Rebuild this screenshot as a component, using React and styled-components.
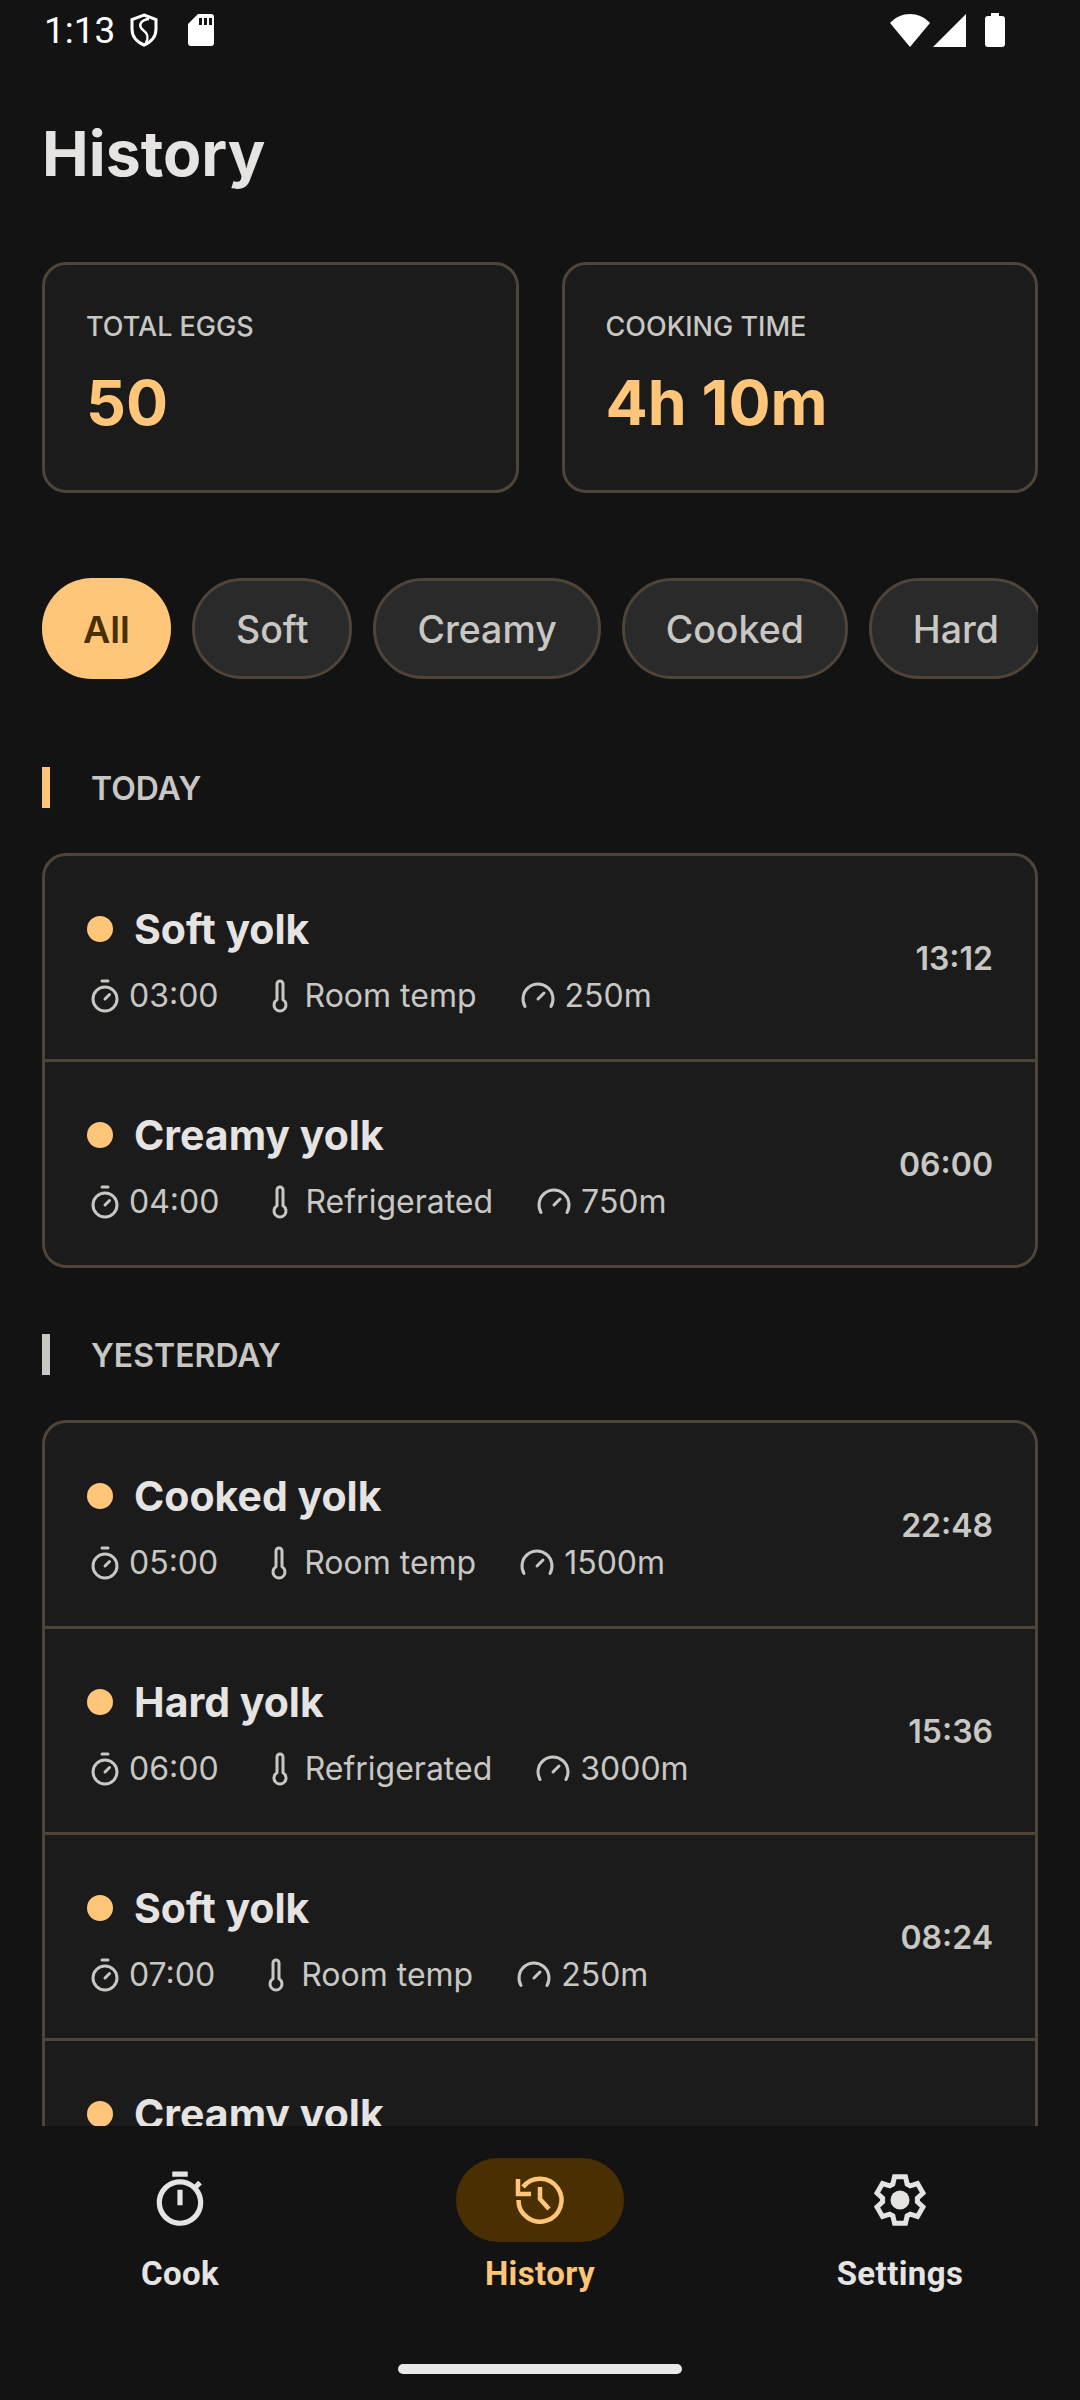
import React from "react";
import styled, { createGlobalStyle } from "styled-components";
import { Timer, Thermometer, Gauge } from "lucide-react";
import { MdOutlineTimer } from "react-icons/md";

const ACCENT = "#ffc67a";
const LINE = "#4e4438";

const Global = createGlobalStyle`
  html, body { margin: 0; padding: 0; background: #131313; }
  * { box-sizing: border-box; }
`;

const Screen = styled.div`
  width: 1080px;
  height: 2400px;
  display: flex;
  flex-direction: column;
  overflow: hidden;
  background: #131313;
  font-family: Inter, "Liberation Sans", sans-serif;
`;

const StatusBar = styled.div`
  height: 60px;
  flex-shrink: 0;
  display: flex;
  align-items: center;
  justify-content: space-between;
  padding: 0 75px 0 44px;
  color: #fff;
  font-family: Roboto, sans-serif;
  font-size: 37px;
`;

const StatusGroup = styled.div`
  display: flex;
  align-items: center;
  gap: ${(p) => p.$gap || 0}px;
  margin-left: ${(p) => p.$left || 0}px;
`;

const Main = styled.main`
  flex: 1;
  min-height: 0;
  overflow: hidden;
  padding: 57px 42px 0;
`;

const Title = styled.h1`
  margin: 0 0 73px;
  font-size: 62.5px;
  line-height: 72px;
  font-weight: 700;
  color: #e6e4e2;
`;

const Stats = styled.div`
  display: grid;
  grid-template-columns: 1fr 1fr;
  gap: 43px;
  margin-bottom: 85px;
`;

const StatCard = styled.div`
  height: 231px;
  padding: 44px 41px;
  background: #1b1b1b;
  border: 3px solid ${LINE};
  border-radius: 24px;
`;

const StatLabel = styled.div`
  font-size: 27px;
  line-height: 36px;
  font-weight: 500;
  color: #c8c7c4;
`;

const StatValue = styled.div`
  margin-top: 20px;
  font-size: 62.5px;
  line-height: 74px;
  font-weight: 700;
  color: ${ACCENT};
`;

const Chips = styled.div`
  display: flex;
  gap: 21px;
  overflow: hidden;
  margin-bottom: 88px;
`;

const Chip = styled.div`
  flex-shrink: 0;
  height: 101px;
  padding: 2px ${(p) => (p.$active ? 41 : 41)}px 0;
  display: flex;
  align-items: center;
  border-radius: 50px;
  font-size: 37.5px;
  font-weight: ${(p) => (p.$active ? 600 : 500)};
  color: ${(p) => (p.$active ? "#4a2f02" : "#c8c7c4")};
  background: ${(p) => (p.$active ? ACCENT : "#2a2a2a")};
  border: ${(p) => (p.$active ? "none" : `3px solid ${LINE}`)};
`;

const SectionHead = styled.div`
  height: 41px;
  display: flex;
  align-items: center;
  padding: 2px 0 0 41px;
  margin-bottom: 45px;
  border-left: 8px solid ${(p) => (p.$accent ? ACCENT : "#c8c7c4")};
  font-size: 32px;
  font-weight: 600;
  color: #c8c7c4;
`;

const Card = styled.div`
  margin-bottom: 66px;
  background: #1b1b1b;
  border: 3px solid ${LINE};
  border-radius: 24px;
`;

const Row = styled.div`
  height: ${(p) => (p.$first ? 203 : 206)}px;
  display: flex;
  align-items: center;
  justify-content: space-between;
  padding: 0 42px;
  border-top: ${(p) => (p.$first ? "none" : `3px solid ${LINE}`)};
`;

const RowBody = styled.div`
  display: flex;
  flex-direction: column;
  gap: 20px;
  padding-top: 6px;
`;

const RowTitle = styled.div`
  display: flex;
  align-items: center;
  gap: 21px;
  font-size: 41px;
  line-height: 50px;
  font-weight: 700;
  color: #e6e4e2;
`;

const Dot = styled.span`
  width: 26px;
  height: 26px;
  border-radius: 50%;
  background: ${ACCENT};
`;

const Meta = styled.div`
  display: flex;
  gap: 43px;
  font-size: 32px;
  line-height: 44px;
  color: #c8c7c4;
`;

const MetaItem = styled.span`
  display: flex;
  align-items: center;
  gap: ${(p) => p.$gap}px;
`;

const RowTime = styled.div`
  padding-top: 2px;
  font-size: 32px;
  font-weight: 600;
  color: #c8c7c4;
`;

const Nav = styled.nav`
  height: 274px;
  flex-shrink: 0;
  position: relative;
  display: grid;
  grid-template-columns: repeat(3, 1fr);
  align-items: start;
  padding-top: 32px;
  background: #131313;
`;

const NavItem = styled.div`
  display: flex;
  flex-direction: column;
  align-items: center;
  font-family: Roboto, sans-serif;
  font-size: 33px;
  line-height: 40px;
  font-weight: 700;
  letter-spacing: 0.4px;
  color: ${(p) => (p.$active ? ACCENT : "#e6e4e2")};
`;

const NavIcon = styled.div`
  width: 168px;
  height: 84px;
  margin-bottom: 12px;
  display: flex;
  align-items: center;
  justify-content: center;
  border-radius: 42px;
  background: ${(p) => (p.$active ? "#4a2f02" : "transparent")};
`;

const HomeBar = styled.div`
  position: absolute;
  left: 398px;
  bottom: 26px;
  width: 284px;
  height: 10px;
  border-radius: 5px;
  background: #e8e8e8;
`;

// six tooth gear outline with a filled middle, no package has this exact one
function gearPath() {
  const pts = [];
  for (let k = 0; k < 6; k++) {
    const a = (k * 60 - 90) * (Math.PI / 180);
    [
      [17.5, -0.42],
      [24, -0.23],
      [24, 0.23],
      [17.5, 0.42],
    ].forEach(([r, d]) => {
      pts.push(`${(33 + r * Math.cos(a + d)).toFixed(2)} ${(33 + r * Math.sin(a + d)).toFixed(2)}`);
    });
  }
  return `M${pts.join("L")}Z`;
}

const GearIcon = () => (
  <svg width="66" height="66" viewBox="0 0 66 66" fill="none" stroke="#e6e4e2" strokeWidth="5">
    <path d={gearPath()} />
    <circle cx="33" cy="33" r="9.5" fill="#e6e4e2" stroke="none" />
  </svg>
);

const HistoryIcon = () => (
  <svg width="66" height="66" viewBox="-33 -33 66 66" fill="none" stroke={ACCENT} strokeWidth="4.5">
    <path d="M-17 -13 A21.5 21.5 0 1 1 -21.5 0" />
    <path d="M-22 -21 V-6 H-9" />
    <path d="M0 -13 V-1 L9 9" />
  </svg>
);

const ShieldIcon = () => (
  <svg width="30" height="34" viewBox="0 0 30 34" fill="none" stroke="#fff" strokeWidth="3">
    <path d="M15 2 L27 6.5 V16 C27 23.5 22 29 15 32 C8 29 3 23.5 3 16 V6.5 Z" />
    <path d="M20 6 C11 7 9 13 14 17 C19 20.5 20 24 17 30" strokeWidth="2.5" />
  </svg>
);

const SdIcon = () => (
  <svg width="26" height="32" viewBox="0 0 26 32">
    <path d="M10 0 H23 a3 3 0 0 1 3 3 V29 a3 3 0 0 1 -3 3 H3 a3 3 0 0 1 -3 -3 V10 Z" fill="#fff" />
    <rect x="11" y="4" width="3" height="7" fill="#131313" />
    <rect x="16" y="4" width="3" height="7" fill="#131313" />
    <rect x="21" y="4" width="3" height="7" fill="#131313" />
  </svg>
);

const WifiIcon = () => (
  <svg width="40" height="33" viewBox="0 0 40 33">
    <path d="M20 33 L0 9 C11 -3 29 -3 40 9 Z" fill="#fff" />
  </svg>
);

const SignalIcon = () => (
  <svg width="33" height="33" viewBox="0 0 33 33">
    <path d="M33 0 V33 H0 Z" fill="#fff" />
  </svg>
);

const BatteryIcon = () => (
  <svg width="20" height="34" viewBox="0 0 20 34">
    <path d="M6 0 H14 V3 H17 a3 3 0 0 1 3 3 V31 a3 3 0 0 1 -3 3 H3 a3 3 0 0 1 -3 -3 V6 a3 3 0 0 1 3 -3 H6 Z" fill="#fff" />
  </svg>
);

function HistoryRow({ first, title, duration, temp, distance, time }) {
  return (
    <Row $first={first}>
      <RowBody>
        <RowTitle>
          <Dot />
          {title}
        </RowTitle>
        <Meta>
          <MetaItem $gap={6}>
            <Timer size={36} strokeWidth={2} />
            {duration}
          </MetaItem>
          <MetaItem $gap={7}>
            <Thermometer size={36} strokeWidth={2} />
            {temp}
          </MetaItem>
          <MetaItem $gap={9}>
            <Gauge size={36} strokeWidth={2} />
            {distance}
          </MetaItem>
        </Meta>
      </RowBody>
      <RowTime>{time}</RowTime>
    </Row>
  );
}

const today = [
  { title: "Soft yolk", duration: "03:00", temp: "Room temp", distance: "250m", time: "13:12" },
  { title: "Creamy yolk", duration: "04:00", temp: "Refrigerated", distance: "750m", time: "06:00" },
];

const yesterday = [
  { title: "Cooked yolk", duration: "05:00", temp: "Room temp", distance: "1500m", time: "22:48" },
  { title: "Hard yolk", duration: "06:00", temp: "Refrigerated", distance: "3000m", time: "15:36" },
  { title: "Soft yolk", duration: "07:00", temp: "Room temp", distance: "250m", time: "08:24" },
  { title: "Creamy yolk", duration: "08:00", temp: "Refrigerated", distance: "750m", time: "01:12" },
];

export default function App() {
  return (
    <Screen>
      <Global />
      <StatusBar>
        <StatusGroup>
          1:13
          <StatusGroup $gap={29} $left={14}>
            <ShieldIcon />
            <SdIcon />
          </StatusGroup>
        </StatusGroup>
        <StatusGroup>
          <StatusGroup $gap={3}>
            <WifiIcon />
            <SignalIcon />
          </StatusGroup>
          <StatusGroup $left={19}>
            <BatteryIcon />
          </StatusGroup>
        </StatusGroup>
      </StatusBar>

      <Main>
        <Title>History</Title>
        <Stats>
          <StatCard>
            <StatLabel>TOTAL EGGS</StatLabel>
            <StatValue>50</StatValue>
          </StatCard>
          <StatCard>
            <StatLabel>COOKING TIME</StatLabel>
            <StatValue>4h 10m</StatValue>
          </StatCard>
        </Stats>
        <Chips>
          <Chip $active>All</Chip>
          <Chip>Soft</Chip>
          <Chip>Creamy</Chip>
          <Chip>Cooked</Chip>
          <Chip>Hard</Chip>
        </Chips>

        <SectionHead $accent>TODAY</SectionHead>
        <Card>
          {today.map((r, i) => (
            <HistoryRow key={r.time} first={i === 0} {...r} />
          ))}
        </Card>

        <SectionHead>YESTERDAY</SectionHead>
        <Card>
          {yesterday.map((r, i) => (
            <HistoryRow key={r.time} first={i === 0} {...r} />
          ))}
        </Card>
      </Main>

      <Nav>
        <NavItem>
          <NavIcon>
            <MdOutlineTimer size={62} />
          </NavIcon>
          Cook
        </NavItem>
        <NavItem $active>
          <NavIcon $active>
            <HistoryIcon />
          </NavIcon>
          History
        </NavItem>
        <NavItem>
          <NavIcon>
            <GearIcon />
          </NavIcon>
          Settings
        </NavItem>
        <HomeBar />
      </Nav>
    </Screen>
  );
}
